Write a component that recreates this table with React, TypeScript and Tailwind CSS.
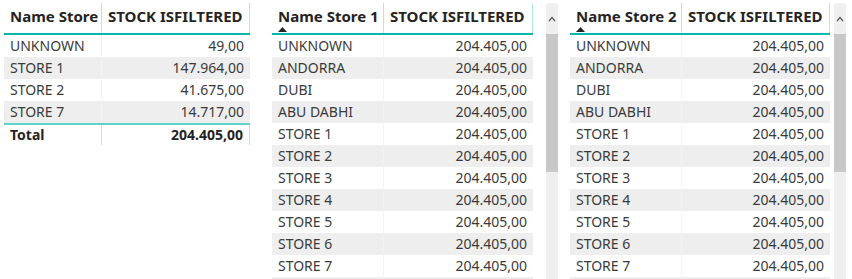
import React from "react";

type Row = { name: string; value: string };

const font = { fontFamily: '"Segoe UI", "Noto Sans", "Open Sans", sans-serif' };

const storesSummary: Row[] = [
  { name: "UNKNOWN", value: "49,00" },
  { name: "STORE 1", value: "147.964,00" },
  { name: "STORE 2", value: "41.675,00" },
  { name: "STORE 7", value: "14.717,00" },
];

const storeNames = [
  "UNKNOWN",
  "ANDORRA",
  "DUBI",
  "ABU DABHI",
  "STORE 1",
  "STORE 2",
  "STORE 3",
  "STORE 4",
  "STORE 5",
  "STORE 6",
  "STORE 7",
];

const allStores: Row[] = storeNames.map((name) => ({ name, value: "204.405,00" }));
// next row is only a sliver at the bottom edge, text below the fold
const withSliver: Row[] = [...allStores, { name: "", value: "" }];

function SortArrow() {
  return (
    <svg width="9" height="5" viewBox="0 0 9 5" className="block mt-[1px]">
      <polygon points="0,5 4.5,0 9,5" fill="#252423" />
    </svg>
  );
}

function Scrollbar() {
  return (
    <div className="w-[12px] mt-[3px] bg-[#f0f0f0] flex flex-col shrink-0 h-[276px]">
      <div className="h-[31px] flex items-center justify-center">
        <svg width="8" height="6" viewBox="0 0 8 6">
          <polyline points="1,5 4,1.5 7,5" fill="none" stroke="#555" strokeWidth="1.2" />
        </svg>
      </div>
      <div className="h-[138px] bg-[#c8c8c8]" />
    </div>
  );
}

function Table({
  title,
  rows,
  col1,
  col2,
  sorted,
  total,
}: {
  title: string;
  rows: Row[];
  col1: string;
  col2: string;
  sorted?: boolean;
  total?: string;
}) {
  return (
    <div className="flex flex-col shrink-0 text-[#252423]" style={font}>
      {/* Header */}
      <div className="flex h-[35px] border-b-2 border-[#01b8aa]">
        <div
          className={`${col1} mt-[3px] pl-[6px] pt-[3px] border-r border-[#b3e7e2] text-[15px] font-bold leading-[20px] whitespace-nowrap`}
        >
          {title}
          {sorted && <SortArrow />}
        </div>
        <div
          className={`${col2} mt-[3px] pl-[6px] pt-[3px] border-r border-[#b3e7e2] text-[15px] font-bold leading-[20px] whitespace-nowrap`}
        >
          STOCK ISFILTERED
        </div>
      </div>

      {/* Body */}
      {rows.map((row, i) => (
        <div
          key={i}
          className={`flex h-[22px] text-[14px] leading-[22px] text-[#3a3a3a] ${
            i % 2 === 1 ? "bg-[#eeeeee]" : "bg-white"
          }`}
        >
          <div className={`${col1} pl-[6px] border-r border-[#f3f3f3] whitespace-nowrap`}>
            {row.name}
          </div>
          <div className={`${col2} pr-[6px] text-right whitespace-nowrap`}>{row.value}</div>
        </div>
      ))}

      {total && (
        <div className="flex h-[22px] border-t-2 border-[#5fd3c9] text-[14px] leading-[20px] font-bold text-[#252423]">
          <div className={`${col1} pl-[6px] border-r border-[#b3e7e2]`}>Total</div>
          <div className={`${col2} pr-[6px] text-right border-r border-[#b3e7e2]`}>{total}</div>
        </div>
      )}
    </div>
  );
}

export default function App() {
  return (
    <div className="w-[852px] h-[279px] overflow-hidden bg-white flex items-start">
      <div className="ml-[4px]">
        <Table
          title="Name Store"
          rows={storesSummary}
          col1="w-[98px]"
          col2="w-[148px]"
          total="204.405,00"
        />
      </div>

      <div className="ml-[22px] flex items-start">
        <Table title="Name Store 1" rows={withSliver} col1="w-[112px]" col2="w-[149px]" sorted />
        <div className="ml-[13px] flex">
          <Scrollbar />
        </div>
      </div>

      <div className="ml-[12px] flex items-start">
        <Table title="Name Store 2" rows={withSliver} col1="w-[112px]" col2="w-[148px]" sorted />
        <div className="ml-[4px] flex">
          <Scrollbar />
        </div>
      </div>
    </div>
  );
}
